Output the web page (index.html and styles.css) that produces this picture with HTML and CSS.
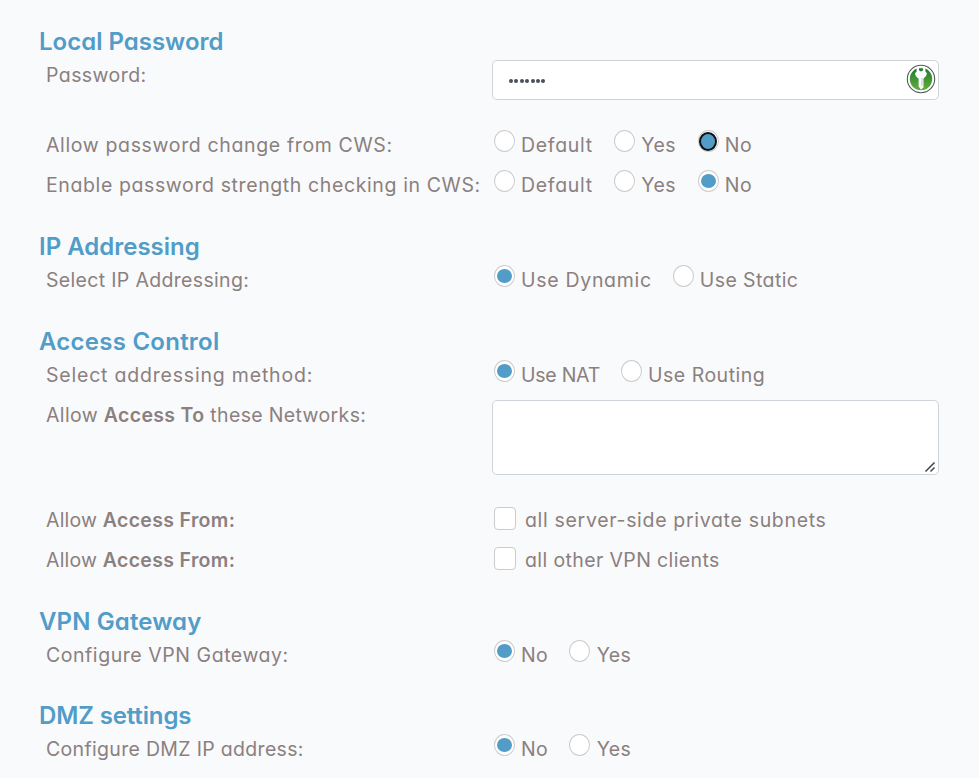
FILE: index.html
```
<!DOCTYPE html>
<html lang="en">
<head>
<meta charset="utf-8">
<title>User settings</title>
<link rel="stylesheet" href="styles.css">
</head>
<body>
<form class="settings">
  <section>
    <h2 class="h-local">Local Password</h2>
    <div class="row row-password">
      <div class="label"><span class="t-password">Password:</span></div>
      <div class="password">
        <span class="dots"><i></i><i></i><i></i><i></i><i></i><i></i><i></i></span>
        <svg class="key" width="30" height="30" viewBox="0 0 30 30">
          <defs><linearGradient id="g" x1="0" y1="0" x2="0" y2="1"><stop offset="0" stop-color="#1f7a2c"/><stop offset="1" stop-color="#62b03c"/></linearGradient></defs>
          <circle cx="15" cy="15" r="13.700" fill="#fff" stroke="#55595c" stroke-width="1.1"/>
          <circle cx="15" cy="15" r="11.200" fill="url(#g)"/>
          <path d="M10.600 3.400V7.500L9 9.300Q9.300 12.800 12.600 14.600V22.500L15 25.500L17.500 23.500V14.600Q20.700 12.800 21 9.300L19.400 7.500V3.400Z" fill="#fff"/>
          <path d="M12.900 4.200H17.100V6L16 7.200H14L12.900 6Z" fill="#26802d"/>
          <path d="M16 14V22" stroke="#b9c4b9" stroke-width="1"/>
        </svg>
      </div>
    </div>
    <div class="row">
      <div class="label"><span class="t-change">Allow password change from CWS:</span></div>
      <div class="options">
        <label><span class="radio"></span><span class="t-default">Default</span></label>
        <label><span class="radio"></span><span class="t-yes">Yes</span></label>
        <label><span class="radio on focus"></span><span class="t-no">No</span></label>
      </div>
    </div>
    <div class="row">
      <div class="label"><span class="t-strength">Enable password strength checking in CWS:</span></div>
      <div class="options">
        <label><span class="radio"></span><span class="t-default">Default</span></label>
        <label><span class="radio"></span><span class="t-yes">Yes</span></label>
        <label><span class="radio on"></span><span class="t-no">No</span></label>
      </div>
    </div>
  </section>
  <section>
    <h2 class="h-ip">IP Addressing</h2>
    <div class="row">
      <div class="label"><span class="t-ip">Select IP Addressing:</span></div>
      <div class="options">
        <label><span class="radio on"></span><span class="t-dynamic">Use Dynamic</span></label>
        <label><span class="radio"></span><span class="t-static">Use Static</span></label>
      </div>
    </div>
  </section>
  <section>
    <h2 class="h-access">Access Control</h2>
    <div class="row">
      <div class="label"><span class="t-method">Select addressing method:</span></div>
      <div class="options">
        <label><span class="radio on"></span><span class="t-nat">Use NAT</span></label>
        <label><span class="radio"></span><span class="t-routing">Use Routing</span></label>
      </div>
    </div>
    <div class="row row-networks">
      <div class="label"><span class="t-networks">Allow <b>Access To</b> these Networks:</span></div>
      <div class="networks">
        <svg class="grip" width="12" height="12" viewBox="0 0 12 12"><path d="M1.500 10.500L10.500 1.500M6.500 10.500L10.500 6.500" stroke="#444" stroke-width="1.500"/></svg>
      </div>
    </div>
    <div class="row">
      <div class="label"><span class="t-from">Allow <b>Access From:</b></span></div>
      <div class="options"><label><span class="check"></span><span class="t-subnets">all server-side private subnets</span></label></div>
    </div>
    <div class="row">
      <div class="label"><span class="t-from">Allow <b>Access From:</b></span></div>
      <div class="options"><label><span class="check"></span><span class="t-clients">all other VPN clients</span></label></div>
    </div>
  </section>
  <section class="gateway">
    <h2 class="h-vpn">VPN Gateway</h2>
    <div class="row">
      <div class="label"><span class="t-vpn">Configure VPN Gateway:</span></div>
      <div class="options">
        <label><span class="radio on"></span><span class="t-no">No</span></label>
        <label><span class="radio"></span><span class="t-yes">Yes</span></label>
      </div>
    </div>
  </section>
  <section>
    <h2 class="h-dmz">DMZ settings</h2>
    <div class="row">
      <div class="label"><span class="t-dmz">Configure DMZ IP address:</span></div>
      <div class="options">
        <label><span class="radio on"></span><span class="t-no">No</span></label>
        <label><span class="radio"></span><span class="t-yes">Yes</span></label>
      </div>
    </div>
  </section>
</form>
</body>
</html>
```
FILE: styles.css
```
*, *::before { box-sizing: border-box; }
body {
  margin: 0;
  height: 778px;
  overflow: hidden;
  background: #f8fafc;
  color: #8b807e;
  font: 400 19.5px/30px Inter, "Open Sans", sans-serif;
  font-feature-settings: "cv11", "ss03";
}
.settings { padding: 25px 40px 0 39px; }
section { margin-bottom: 20px; }
.gateway { margin-bottom: 19px; }
h2 {
  margin: 0;
  height: 35px;
  color: #529cc8;
  font-size: 24px;
  font-weight: 600;
  line-height: 34px;
  white-space: nowrap;
}
.row {
  display: grid;
  grid-template-columns: 453px 1fr;
  height: 40px;
}
.row-password { height: 70px; }
.row-networks { height: 105px; }
.label { padding-left: 7px; white-space: nowrap; }
b { font-weight: 600; letter-spacing: 0.33px; }
.options { display: flex; padding-left: 2px; gap: 21px; }
.options label { display: flex; white-space: nowrap; }
.radio, .check {
  flex: none;
  width: 21px;
  height: 22px;
  border: 1px solid #ccc;
  background: #fff;
}
.radio {
  display: flex;
  align-items: center;
  justify-content: center;
  margin-right: 6px;
  border-radius: 50%;
}
.radio.on::before {
  content: "";
  width: 15px;
  height: 14px;
  border-radius: 50%;
  background: #529cc8;
}
.radio.focus::before { width: 18px; height: 19px; border: 2px solid #101010; }
.check { width: 22px; margin: 2px 9px 0 0; height: 23px; border-radius: 4px; }
.password, .networks {
  position: relative;
  border: 1px solid #ced4da;
  border-radius: 5px;
  background: #fff;
}
.password { display: flex; align-items: center; height: 40px; padding: 2px 0 0 16px; }
.dots { display: flex; gap: 1.4px; }
.dots i { width: 4px; height: 4px; border-radius: 50%; background: #495057; }
.key { position: absolute; right: 2px; top: 3px; }
.networks { height: 75px; }
.grip { position: absolute; right: 2px; bottom: 1px; }

/* Tracking per text */
.h-access { letter-spacing: 0.25px; }
.h-vpn { letter-spacing: 0.12px; }
.h-dmz { letter-spacing: -0.13px; }
.t-password { letter-spacing: 0.42px; }
.t-change { letter-spacing: 0.64px; }
.t-strength { letter-spacing: 0.61px; }
.t-default { letter-spacing: 0.7px; }
.t-yes { margin: 0 1px 0 0.5px; letter-spacing: 0.35px; }
.t-no { letter-spacing: 0.4px; }
.t-ip { letter-spacing: 0.33px; }
.t-dynamic { letter-spacing: 0.7px; }
.t-static { letter-spacing: 0.4px; }
.t-method { letter-spacing: 0.8px; }
.t-nat { letter-spacing: -0.25px; }
.t-routing { letter-spacing: 0.5px; }
.t-networks { letter-spacing: 0.35px; }
.t-from { letter-spacing: 0.18px; }
.t-subnets { letter-spacing: 0.68px; }
.t-clients { letter-spacing: 0.38px; }
.t-vpn { letter-spacing: 0.55px; }
.t-dmz { letter-spacing: 0.32px; }
```
